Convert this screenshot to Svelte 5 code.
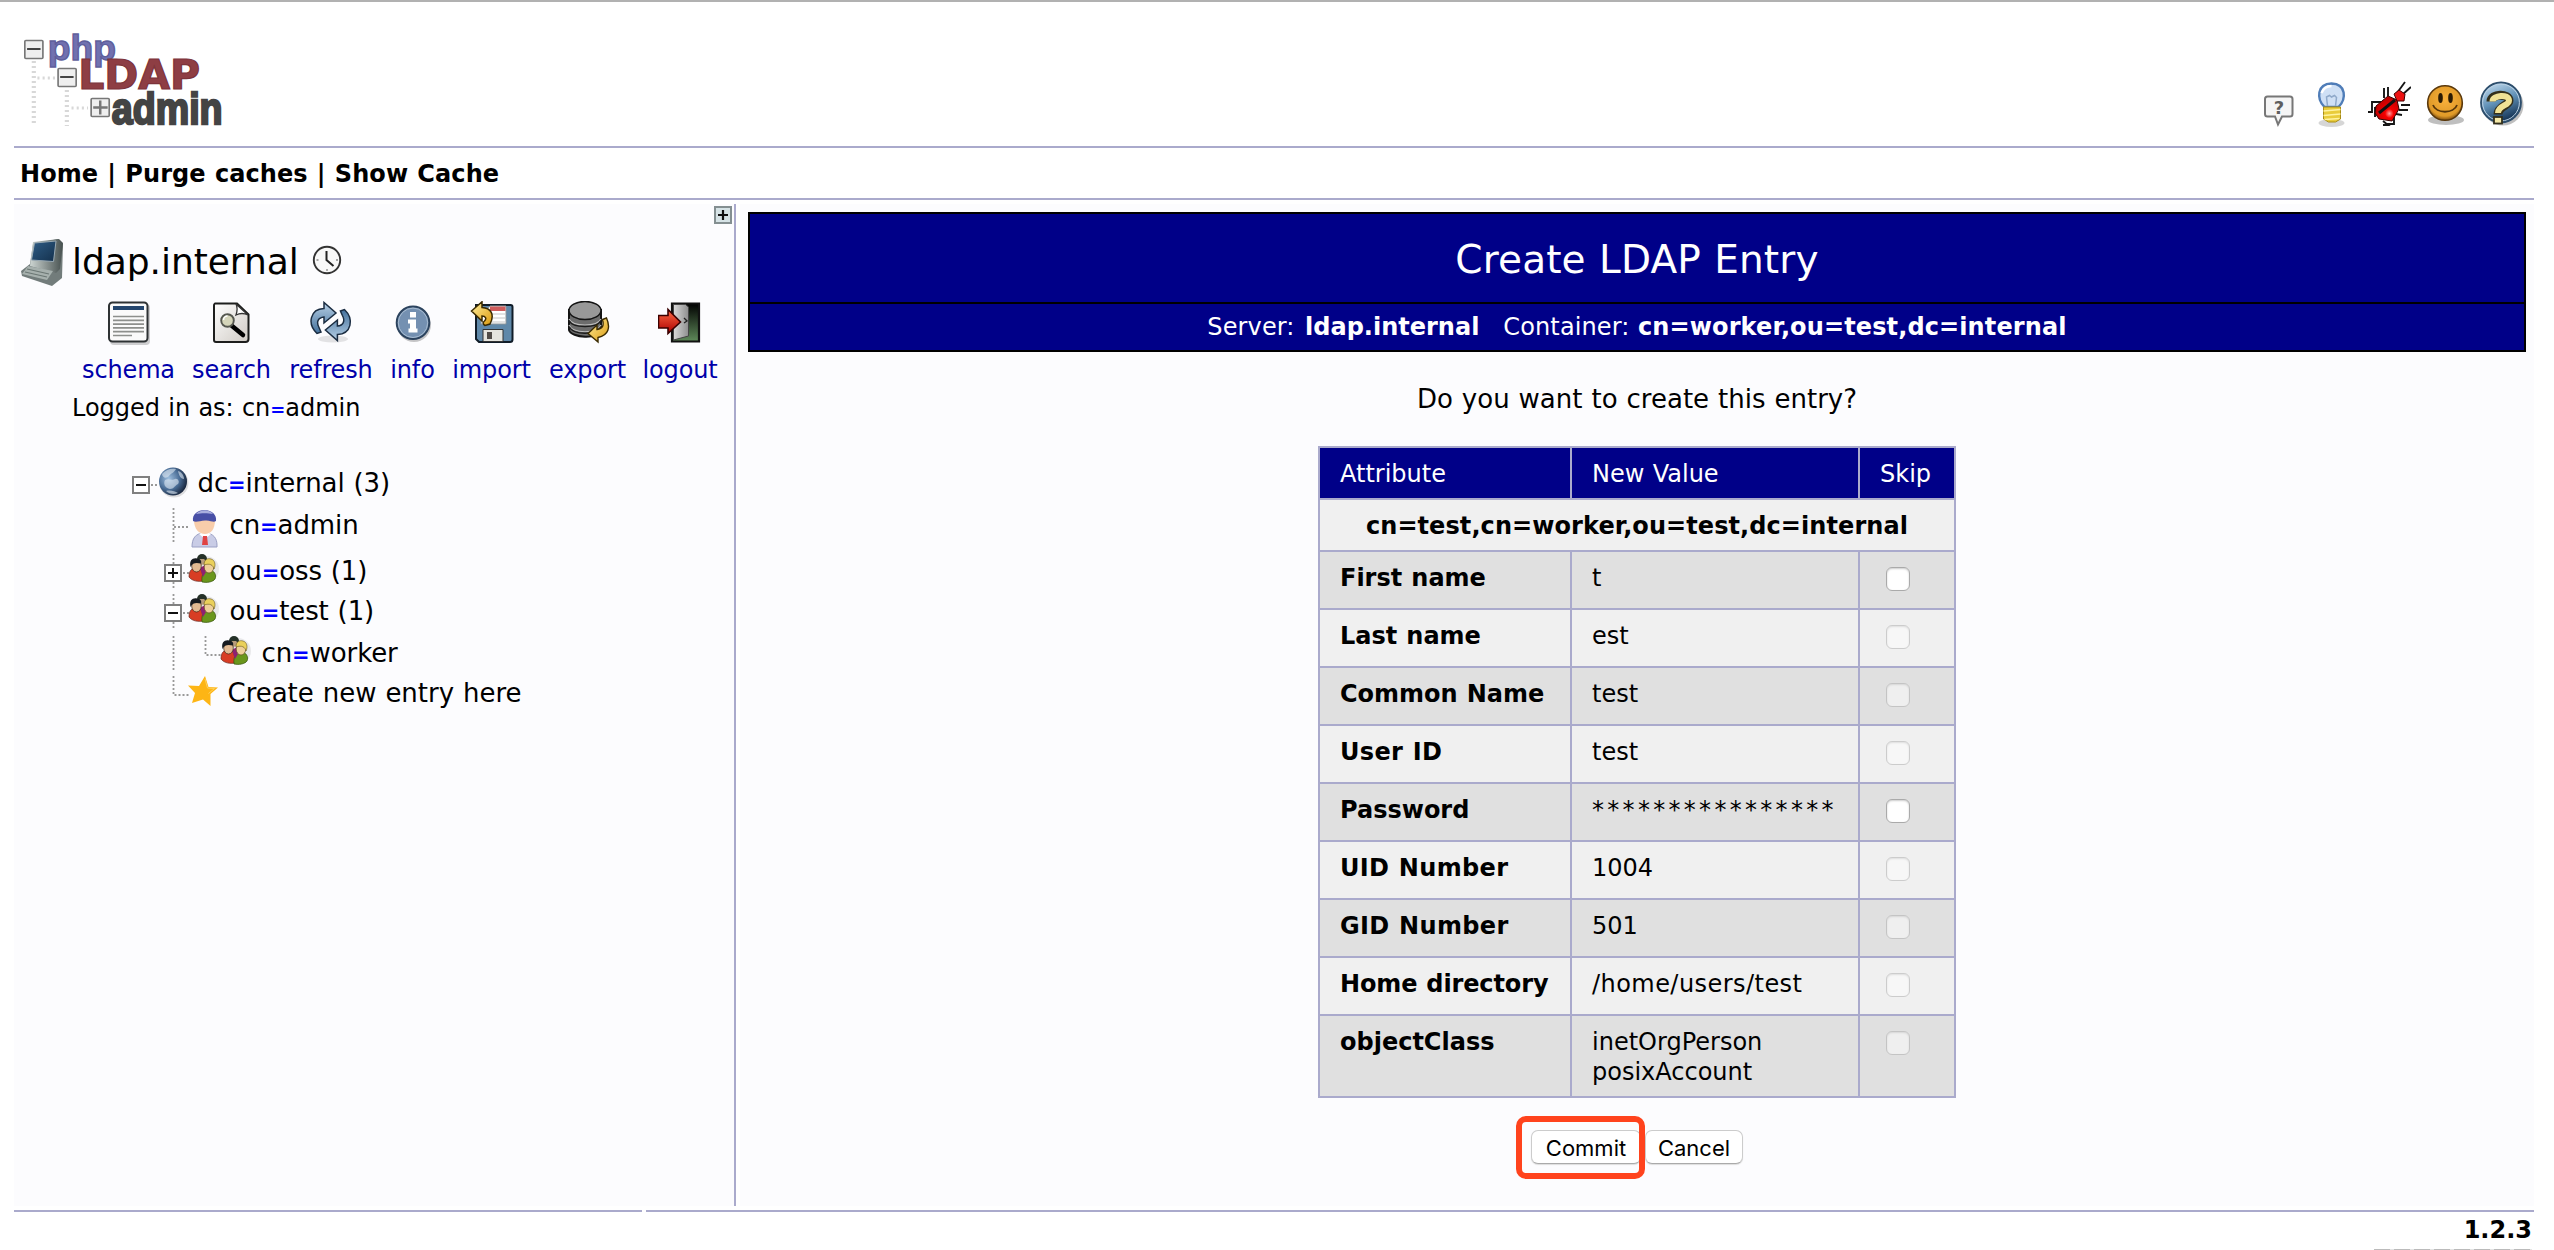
<script>
  const tools = ['schema', 'search', 'refresh', 'info', 'import', 'export', 'logout'];
  const helpers = ['hint', 'bulb', 'bug', 'smile', 'help'];

  const tree = [
    { cells: ['root', 'globe'], rdn: ['dc', 'internal (3)'], h: 42, up: 2 },
    { cells: ['gap', 'tee', 'person'], rdn: ['cn', 'admin'], h: 46, up: 2 },
    { cells: ['gap', 'plus', 'people'], rdn: ['ou', 'oss (1)'], h: 40, up: 2 },
    { cells: ['gap', 'minus', 'people'], rdn: ['ou', 'test (1)'], h: 42, up: 2 },
    { cells: ['gap', 'line', 'corner', 'people'], rdn: ['cn', 'worker'], h: 40, up: 2 },
    { cells: ['gap', 'corner', 'star'], label: 'Create new entry here', h: 40, up: 2 }
  ];

  const rows = [
    { name: 'First name', values: ['t'], skip: true },
    { name: 'Last name', values: ['est'] },
    { name: 'Common Name', values: ['test'] },
    { name: 'User ID', values: ['test'], wide: true },
    { name: 'Password', values: ['****************'], skip: true, masked: true },
    { name: 'UID Number', values: ['1004'], wide: true },
    { name: 'GID Number', values: ['501'], wide: true },
    { name: 'Home directory', values: ['/home/users/test'], path: true },
    { name: 'objectClass', values: ['inetOrgPerson', 'posixAccount'] }
  ];
</script>

{#snippet toolIcon(name)}
  <svg class="tool-icon" viewBox="0 0 44 46">
    {#if name === 'schema'}
      <rect x="3" y="3" width="40" height="41" rx="4" fill="#000" opacity=".18" />
      <rect x="2" y="1.500" width="38.500" height="39" rx="3.500" fill="#fafafa" stroke="#2e3234" stroke-width="2" />
      <path d="M6 5h31v4H6z" fill="#24466e" />
      <path d="M6 15.500h31M6 19.300h31M6 23.100h31M6 26.900h31M6 30.700h31M6 34.500h19" stroke="#8d8f8c" stroke-width="1.700" />
    {:else if name === 'search'}
      <path d="M5 2.500h22l11.500 11V38a3 3 0 0 1-3 3H6a2 2 0 0 1-2-2V4.500a2 2 0 0 1 1-2z" fill="url(#paper)" stroke="#1d1e1d" stroke-width="2" />
      <path d="M26 3c2 4 1 8 0 11 4-2 8-2 12 0z" fill="#fff" stroke="#333" stroke-width="1.300" />
      <path d="M21.500 24.500L33 34" stroke="#000" stroke-width="4.500" stroke-linecap="round" />
      <circle cx="17.500" cy="19.500" r="6.300" fill="#d5d5ba" stroke="#55574f" stroke-width="1.900" />
      <path d="M13.500 19a4 4 0 0 1 4-4" stroke="#fff" stroke-width="1.500" fill="none" />
    {:else if name === 'refresh'}
      <ellipse cx="24" cy="38" rx="15" ry="3.500" fill="#000" opacity=".1" />
      <path d="M8 32.500C-2 23 1 8 15 7.500V1.500L27 12 15 22v-6c-6 .5-8 5-5 10.500l2 4.500z" fill="url(#blue)" stroke="#1b2d42" stroke-width="1.500" />
      <path d="M8 32.500C-2 23 1 8 15 7.500V1.500L27 12 15 22v-6c-6 .5-8 5-5 10.500l2 4.500z" transform="rotate(180 21.700 20.500)" fill="url(#blue)" stroke="#1b2d42" stroke-width="1.500" />
    {:else if name === 'info'}
      <circle cx="23" cy="24" r="17" fill="#000" opacity=".22" />
      <circle cx="22" cy="21.800" r="16.300" fill="#7490b1" stroke="#2c435e" stroke-width="2" />
      <circle cx="22" cy="21.800" r="14.700" fill="none" stroke="#a8bcd1" stroke-width="1" />
      <path d="M19 11h6v5.500h-6zM17 18.500h8v9h1.500v4h-9v-4H19v-5h-2z" fill="#fff" />
    {:else if name === 'import'}
      <path d="M6 4h34.500a2 2 0 0 1 2 2v32.500a2.500 2.500 0 0 1-2.500 2.500H9l-3-3z" fill="#5f88a9" stroke="#101c28" stroke-width="2" />
      <path d="M20 5h16v18H11V15z" fill="#fff" stroke="#8c9499" />
      <path d="M20 5.500h15.500V10H20z" fill="#cf5c5c" />
      <path d="M20 13h15M17 17h18M13 21h22" stroke="#c5c5c5" stroke-width="1.200" />
      <path d="M13 28.500h20v12H13z" fill="#e5e5df" stroke="#333" />
      <path d="M17 31h5v7h-5z" fill="#504c48" />
      <path d="M1.500 10L12 .8v5.700c9 .5 13 7 8 16.500l-5 1.500c-2-1-2.500-3-.5-4.500 2.500-2.500 1-5-2.500-5v5z" fill="url(#gold)" stroke="#3a2a00" stroke-width="1.500" />
    {:else if name === 'export'}
      <path d="M3 9v20c2 8 30 10 32 0V9z" fill="#6c6c6c" stroke="#141414" stroke-width="2" />
      <path d="M3 18c4 8 28 8 32 0M3 24c4 9 28 9 32 0" fill="none" stroke="#bdbdbd" stroke-width="1.200" />
      <path d="M3 19.500c4 8 28 8 32 0M3 25.500c4 9 28 9 32 0" fill="none" stroke="#1b1b1b" stroke-width="1.500" />
      <ellipse cx="19" cy="9.500" rx="16" ry="9" fill="#989898" stroke="#141414" stroke-width="1.500" />
      <path d="M22 32.500L31 24v4.500c6-1 7-4 5.500-10l4-1.500c4 9 2.500 17-8.500 19.500V41z" fill="url(#gold)" stroke="#3a2a00" stroke-width="1.400" />
    {:else}
      <path d="M14 2.500h27v38H14z" fill="url(#night)" stroke="#111" stroke-width="2.200" />
      <path d="M15.500 3.500h12l3 2.500v29L15.500 39z" fill="url(#door)" stroke="#444" stroke-width="1" />
      <path d="M26 17l3 3-3 2" fill="none" stroke="#222" stroke-width="1.300" />
      <path d="M0.500 14.500h9.500V8.500L22.500 21 10 32.500V27H.5z" fill="url(#red)" stroke="#3a0000" stroke-width="1.600" />
    {/if}
  </svg>
{/snippet}

{#snippet treeCell(kind)}
  <svg class="cell" viewBox="0 0 32 36">
    {#if kind === 'tee' || kind === 'plus' || kind === 'minus' || kind === 'line'}
      <path class="dots" d="M16.500 0V35" />
    {/if}
    {#if kind === 'tee'}
      <path class="dots" d="M17 19H32" />
    {:else if kind === 'corner'}
      <path class="dots" d="M16.500 0V19H32" />
    {:else if kind === 'root' || kind === 'plus' || kind === 'minus'}
      <path class="dots" d="M26 19H32" />
      <rect x="8" y="11" width="16" height="16" fill="#fff" stroke="#808080" stroke-width="2" />
      <path d={kind === 'plus' ? 'M11 19h10M16 14v10' : 'M11 19h10'} stroke="#111" stroke-width="2" />
    {:else if kind === 'globe'}
      <circle cx="17" cy="17" r="14.500" fill="#000" opacity=".12" />
      <circle cx="16" cy="15.500" r="14" fill="url(#earth)" />
      <path d="M5 8c4-5 10-6 14-5-2 4-5 4-7 7-2 2-6 3-7-2zM8 14c4-2 7 1 10-1 3-1 5 3 3 5-4 2-4 5-8 5-5-1-7-5-5-9zM21 5c4 1 6 5 6 8-3 0-5-3-6-8zM9 25c4-1 9 0 12 2-4 2-9 1-12-2z" fill="#dfe9f3" opacity=".6" />
    {:else if kind === 'person'}
      <path d="M3 39c0-8 3-14 12.500-14S28 31 28 37v2z" fill="#c9cce6" stroke="#9ba0c4" />
      <path d="M10 26l6 5 6-5-6-3z" fill="#fff" />
      <path d="M14 28h4l1 9h-6z" fill="#e04343" />
      <path d="M5 12c0 9 5 14 11 14s10-5 10-14z" fill="#f8cdab" />
      <path d="M4 13C3 6 9 2 15.500 2 23 2 28 7 27 13c-3 2-5-1-11-.5-5 0-9 2.500-12 .5z" fill="#484fa6" />
      <path d="M7 6c5-5 13-5 17 0-5-1-12-1-17 0z" fill="#a9aede" />
    {:else if kind === 'people'}
      <g transform="translate(-1 0)">
        <circle cx="18" cy="15" r="13" fill="#000" opacity=".08" />
        <circle cx="14" cy="5" r="5" fill="#253128" />
        <path d="M10 7c0 5 8 5 8 0l-2-2h-4z" fill="#b89c7c" />
        <path d="M1 23c0-8 4-9 8-9s6 3 6 13c-5 1-11 0-14-4z" fill="#d83d24" stroke="#67241a" stroke-width=".7" />
        <path d="M14 28c-1-9 3-12 7-12 5 0 8 5 6 9-2 3-8 4-13 3z" fill="#6a961c" stroke="#33520b" stroke-width=".7" />
        <path d="M12 14l5-3 1 7-3 5z" fill="#8d2173" />
        <ellipse cx="8.500" cy="12" rx="4.800" ry="6" fill="#e2ba92" stroke="#382619" stroke-width=".7" />
        <path d="M2.500 13C1 6 5 3.500 9 4.500c3 .5 5 2 4 5-5-1-8-1-10.500 3.500z" fill="#171b20" />
        <ellipse cx="21" cy="13" rx="4.800" ry="6" fill="#efd09a" stroke="#655024" stroke-width=".7" />
        <path d="M16 11c0-6 4-7 7-6 4 1 5 6 3 10-1-4-4-6-10-4z" fill="#ead05b" stroke="#665620" stroke-width=".6" />
      </g>
    {:else if kind === 'star'}
      <path d="M16 0l3.500 11L29 11.500l-7.500 6.500 0 12-7.500-6.500L3 27l3-10L-1 9.500l11 .5z" fill="#fdb515" />
      <path d="M16 3l2.500 9 7 .5-6 5" fill="none" stroke="#ffd05a" stroke-width="1" />
    {/if}
  </svg>
{/snippet}

<svg class="defs" aria-hidden="true">
  <defs>
    <linearGradient id="paper" x1="0" y1="0" x2="1" y2="1"><stop offset="0" stop-color="#fff" /><stop offset="1" stop-color="#cfcac4" /></linearGradient>
    <linearGradient id="blue" x1="0" y1="0" x2="0" y2="1"><stop offset="0" stop-color="#b7d0e6" /><stop offset="1" stop-color="#43709b" /></linearGradient>
    <linearGradient id="gold" x1="0" y1="0" x2="1" y2="1"><stop offset="0" stop-color="#fff0a0" /><stop offset="1" stop-color="#dc9a0c" /></linearGradient>
    <linearGradient id="night" x1="0" y1="0" x2="0" y2="1"><stop offset="0" stop-color="#000" /><stop offset="1" stop-color="#5f8a5a" /></linearGradient>
    <linearGradient id="door" x1="0" y1="0" x2="1" y2="0"><stop offset="0" stop-color="#d9d9d9" /><stop offset="1" stop-color="#8e8e8e" /></linearGradient>
    <linearGradient id="red" x1="0" y1="0" x2="0" y2="1"><stop offset="0" stop-color="#ff6a45" /><stop offset="1" stop-color="#ab0000" /></linearGradient>
    <radialGradient id="earth" cx=".35" cy=".4" r=".7"><stop offset="0" stop-color="#a0c0e0" /><stop offset=".55" stop-color="#4a6d96" /><stop offset="1" stop-color="#131e33" /></radialGradient>
    <linearGradient id="screen" x1="0" y1="0" x2="1" y2="1"><stop offset="0" stop-color="#2f5d86" /><stop offset="1" stop-color="#14304c" /></linearGradient>
    <linearGradient id="shell" x1="0" y1="0" x2="1" y2="0"><stop offset="0" stop-color="#cdd5d2" /><stop offset="1" stop-color="#46504f" /></linearGradient>
    <radialGradient id="face" cx=".5" cy=".4" r=".6"><stop offset="0" stop-color="#f9b13c" /><stop offset=".8" stop-color="#e09a28" /><stop offset="1" stop-color="#7a4c10" /></radialGradient>
    <linearGradient id="ball" x1=".2" y1="0" x2=".6" y2="1"><stop offset="0" stop-color="#c4dcee" /><stop offset=".5" stop-color="#6090b6" /><stop offset="1" stop-color="#0f2d4e" /></linearGradient>
    <radialGradient id="beetle" cx=".6" cy=".7" r=".6"><stop offset="0" stop-color="#ff9c9c" /><stop offset=".3" stop-color="#f50000" /><stop offset="1" stop-color="#c00000" /></radialGradient>
  </defs>
</svg>

<div class="page">
  <header>
    <svg class="logo" viewBox="0 -10 200 114" preserveAspectRatio="none">
      <path class="trunk" d="M9.500 33V98M41.500 62V98" />
      <path class="trunk thin" d="M13 50H31M46 80H62" />
      <text class="php" x="23" y="31.500" textLength="66" lengthAdjust="spacingAndGlyphs">php</text>
      <text class="ldap" x="52.500" y="61.500" textLength="118" lengthAdjust="spacingAndGlyphs">LDAP</text>
      <g transform="translate(85 95.500) scale(.72 1)"><text class="admin" x="0" y="0" textLength="149" lengthAdjust="spacingAndGlyphs">admin</text></g>
      <g fill="#efefef" stroke="#777" stroke-width="1.600">
        <rect x="0.800" y="12.500" width="17.500" height="18" rx="1" />
        <rect x="33" y="40.500" width="17.500" height="18" rx="1" />
        <rect x="65" y="70.500" width="17.500" height="18" rx="1" />
      </g>
      <path d="M3 21H16M35 49H48" stroke="#444" stroke-width="2.200" />
      <path d="M67 79.500H81M73.800 72.500V86.500" stroke="#777" stroke-width="2.400" />
    </svg>
    <div class="helpers">
      {#each helpers as name}
        <svg class={name} viewBox="0 0 44 48">
          {#if name === 'hint'}
            <g transform="translate(1.500 0)">
              <path d="M12 16.500h22.500a2.500 2.500 0 0 1 2.500 2.500v15a2.500 2.500 0 0 1-2.500 2.500H26.500l-4 8-3-8H12a2.500 2.500 0 0 1-2.500-2.500V19a2.500 2.500 0 0 1 2.500-2.500z" fill="#f5f5f5" stroke="#777" stroke-width="2" />
              <text x="23.500" y="33.500" text-anchor="middle" class="hint-mark">?</text>
            </g>
          {:else if name === 'bulb'}
            <g transform="translate(-1.500 1)">
              <ellipse cx="22" cy="42" rx="13" ry="4" fill="#000" opacity=".16" />
              <path d="M15 26C7 18 7 3 22 2.500 37 3 37 18 29 26z" fill="#cfe0f5" stroke="#4f7db8" stroke-width="2.400" />
              <path d="M18 25l-1-9 3-1.500 2 1.500 3-1.500 2 2-1 8.500" fill="none" stroke="#8fa9ca" stroke-width="1.500" />
              <path d="M12 12c2-5 6-7 10-7" fill="none" stroke="#fff" stroke-width="2.500" />
              <path d="M14 26h17v12l-5 3h-7l-5-3z" fill="#e9cc3b" stroke="#a98c13" />
              <path d="M14 30l17-1.500M14 34.500l17-1.500M15 38.500l15-1" stroke="#fff3a0" stroke-width="1.500" />
            </g>
          {:else if name === 'bug'}
            <path d="M17 18V8M21 16V7M30 13l8-11M35 15l9-8M14 22H5v10H1M12 28H8v9M34 25h9M32 30h9M29 34l6 1M27 37v7h-7M16 41l5 4h-5" fill="none" stroke="#161616" stroke-width="1.900" />
            <path d="M9 26l12-10 9 4 2 9-7 12-13-2-4-6z" fill="url(#beetle)" stroke="#300" stroke-width="1" />
            <path d="M27 14l5-4 6 4-1 7-7 0z" fill="#ee1111" stroke="#400" />
            <path d="M12 33L28 20" stroke="#111" stroke-width="3" />
          {:else if name === 'smile'}
            <g transform="translate(-1 1)">
              <ellipse cx="23" cy="39" rx="18" ry="5" fill="#000" opacity=".25" />
              <circle cx="22" cy="22" r="17.300" fill="url(#face)" stroke="#5a380b" stroke-width="1.600" />
              <ellipse cx="17.500" cy="17" rx="2.300" ry="5" fill="#2c1c04" /><ellipse cx="27.500" cy="17" rx="2.300" ry="5" fill="#2c1c04" />
              <path d="M10 24c3 9 21 9 24 0" fill="none" stroke="#55350a" stroke-width="1.800" />
            </g>
          {:else}
            <circle cx="23" cy="25" r="20.500" fill="#000" opacity=".25" />
            <circle cx="21" cy="22.500" r="20" fill="url(#ball)" stroke="#2d4e6c" stroke-width="1.800" />
            <circle cx="21" cy="22.500" r="18.400" fill="none" stroke="#bcd2e4" stroke-width="1" />
            <path d="M11 21.500c0-8 18-8.500 18-1 0 5.500-11 5-11 14" fill="none" stroke="#34301c" stroke-width="9" />
            <path d="M12.500 21.500c0-6.500 16.500-8 16.500-1 0 5.500-11 4.500-11 12.500" fill="none" stroke="#f1e295" stroke-width="6" />
            <rect x="14" y="37" width="8" height="6.500" fill="#f6eaa8" stroke="#34301c" stroke-width="1.800" />
          {/if}
        </svg>
      {/each}
    </div>
  </header>

  <nav><a>Home</a> | <a>Purge caches</a> | <a>Show Cache</a></nav>

  <div class="columns">
    <aside>
      <svg class="expand" viewBox="0 0 18 18">
        <rect x="1" y="1" width="16" height="16" fill="#d6e3e6" stroke="#848f91" stroke-width="2" />
        <path d="M4 9h10M9 4v10" stroke="#111" stroke-width="2.200" />
      </svg>
      <div class="server">
        <svg class="computer" viewBox="0 0 42 48">
          <path d="M12 6L37 1l5 5-1 34-10 8L1 38l-1-5 9-7z" fill="#727c7b" />
          <path d="M12 4L38 1l4 4-3 26-4 4-26-7z" fill="url(#shell)" />
          <path d="M13.500 5L35 3l-2.500 20.500L10.500 22z" fill="url(#screen)" stroke="#99a9b3" stroke-width="1" />
          <path d="M7 28l25 5-6 9L1 36z" fill="#a6b0ad" />
          <path d="M6 31l22 5M4 34l22 5" stroke="#6b7774" stroke-width="1.200" />
        </svg>
        <span class="name">ldap.internal</span>
        <svg class="clock" viewBox="0 0 30 30">
          <circle cx="15" cy="15" r="13.200" fill="#f8f8f8" stroke="#333" stroke-width="1.900" />
          <path d="M14.500 6v9l7 6" fill="none" stroke="#222" stroke-width="2" />
          <path d="M15 24v2M4.500 15h2M24 15h2" stroke="#888" stroke-width="1.300" />
        </svg>
      </div>
      <div class="tools">
        {#each tools as tool}
          <a class="tool">{@render toolIcon(tool)}<span>{tool}</span></a>
        {/each}
      </div>
      <p class="login">Logged in as: cn<b class="eq small">=</b>admin</p>
      <ul class="tree">
        {#each tree as node}
          <li style="height:{node.h}px">
            {#each node.cells as kind}{@render treeCell(kind)}{/each}
            <span class="label" class:create={node.label} style="padding-top:{node.up}px">
              {#if node.rdn}{node.rdn[0]}<b class="eq">=</b>{node.rdn[1]}{:else}{node.label}{/if}
            </span>
          </li>
        {/each}
      </ul>
    </aside>

    <main>
      <section class="banner">
        <h1>Create LDAP Entry</h1>
        <p>Server: <b class="host">ldap.internal</b><span class="container">Container: <b>cn=worker,ou=test,dc=internal</b></span></p>
      </section>
      <p class="question">Do you want to create this entry?</p>
      <div class="sheet">
        <div class="row head"><span>Attribute</span><span>New Value</span><span>Skip</span></div>
        <div class="dn">cn=test,cn=worker,ou=test,dc=internal</div>
        {#each rows as row, i}
          <div class="row" class:odd={i % 2 === 0} class:tall={row.values.length > 1}>
            <b class:wide={row.wide} class:narrow={row.path}>{row.name}</b>
            <span class:masked={row.masked} class:path={row.path}>{#each row.values as value}<div>{value}</div>{/each}</span>
            <span><input type="checkbox" disabled={!row.skip} /></span>
          </div>
        {/each}
      </div>
      <div class="actions">
        <button class="commit">Commit</button><button class="cancel">Cancel</button>
        <i class="highlight"></i>
      </div>
    </main>
  </div>

  <div class="rules"><i></i><i></i></div>
  <footer>1.2.3</footer>
  <div class="badge"></div>
</div>

<style>
  :global(body) { background: #fff; overflow: hidden; }
  .page {
    box-sizing: border-box; width: 2554px; height: 1250px; overflow: hidden;
    border-top: 2px solid #b1b1b1; padding: 0 20px 0 14px;
    font-family: 'DejaVu Sans', Verdana, sans-serif; font-size: 24px; color: #000;
    word-spacing: .03em; background: #fff;
  }
  .defs { position: absolute; width: 0; height: 0; }
  svg { display: block; flex: none; }

  header { display: flex; justify-content: space-between; height: 144px; border-bottom: 2px solid #aaaacc; }
  .logo { width: 206.600px; height: 114px; margin: 16px 0 0 10px; overflow: visible; }
  .trunk { fill: none; stroke: #d8d8d8; stroke-width: 4; stroke-dasharray: 2 3; }
  .thin { stroke-width: 3; }
  .php { font: bold 36px 'Liberation Sans', sans-serif; word-spacing: 0; fill: #7171b0; stroke: #5f5f9c; stroke-width: 1.400; }
  .ldap { font: bold 40px 'DejaVu Sans', sans-serif; fill: #8e3e44; stroke: #7c333a; stroke-width: 1.200; }
  .admin { font: bold 45px 'Liberation Sans', sans-serif; fill: #444; stroke: #444; stroke-width: 2.400; }
  .helpers { display: flex; padding: 78px 10px 0 0; gap: 12.500px; }
  .helpers svg { width: 44px; height: 48px; }
  .hint-mark { font: bold 18px 'DejaVu Sans', sans-serif; fill: #5e5e5e; }

  nav { height: 50px; line-height: 53px; padding-left: 6px; font-weight: bold; border-bottom: 2px solid #aaaacc; white-space: pre; letter-spacing: .08px; }

  .columns { display: flex; gap: 4px; height: 1002px; margin-top: 4px; }
  aside { position: relative; width: 720px; background: #fcfcfe; border-right: 2px solid #aaaacc; }
  .expand { position: absolute; right: 2px; top: 2px; width: 18px; height: 18px; }
  .server { display: flex; align-items: flex-start; padding: 34px 0 0 7px; }
  .computer { width: 42px; height: 48px; }
  .name { font-size: 36px; line-height: 47px; margin-left: 9px; letter-spacing: -.05px; }
  .clock { width: 30px; height: 30px; margin: 7px 0 0 13px; }
  .tools { display: grid; grid-template-columns: 109px 97px 102px 61px 97px 95px 90px; padding: 15px 0 0 60px; }
  .tool { display: flex; flex-direction: column; align-items: center; color: #0000aa; line-height: 30px; letter-spacing: -.15px; }
  .tool-icon { width: 44px; height: 46px; margin-bottom: 8px; }
  .login { margin: 8px 0 0 58px; line-height: 30px; letter-spacing: -.03px; }
  .eq { color: #00f; font-size: 21px; line-height: 1; }
  .eq.small { font-size: 18px; }

  .tree { list-style: none; margin: 43px 0 0; padding: 0 0 0 111px; font-size: 26px; }
  .tree li { display: flex; align-items: flex-start; }
  .cell { width: 32px; height: 36px; overflow: visible; }
  .dots { fill: none; stroke: #999; stroke-width: 1.800; stroke-dasharray: 2 2; }
  .label { margin-left: 8.500px; line-height: 31px; white-space: nowrap; letter-spacing: -.1px; }
  .label.create { margin-left: 6.500px; letter-spacing: -.02px; }

  main { flex: 1; background: #fcfcfe; display: flex; flex-direction: column; align-items: center; padding: 8px 8px 0; }
  .banner { align-self: stretch; border: 2px solid #000; background: #000088; color: #fff; text-align: center; }
  h1 { margin: 0; height: 88px; line-height: 91px; font-size: 39px; font-weight: normal; border-bottom: 2px solid #000; letter-spacing: .15px; }
  .banner p { margin: 0; height: 46px; line-height: 47px; letter-spacing: .12px; }
  .host { margin-left: 2px; letter-spacing: 0; }
  .container { margin-left: 24px; }
  .question { margin: 30px 0 0; font-size: 26px; line-height: 34px; }
  .sheet {
    box-sizing: border-box; width: 638px; margin-top: 30px; padding: 2px;
    background: #aaaacc; display: flex; flex-direction: column; gap: 2px;
  }
  .row { display: grid; grid-template-columns: 250px 286px 94px; gap: 2px; height: 56px; line-height: 30px; }
  .row > * { padding: 11px 0 0 20px; background: #f0f0f0; white-space: nowrap; }
  .row > .masked { letter-spacing: 3.300px; }
  .row > .path { letter-spacing: .45px; }
  .row > .wide { letter-spacing: .35px; }
  .row > .narrow { letter-spacing: -.12px; }
  .row.odd > * { background: #e0e0e0; }
  .row.tall { height: 80px; }
  .row.head { height: 50px; color: #fff; }
  .row.head > * { background: #000088; padding-top: 11px; }
  .dn { height: 50px; line-height: 52px; text-align: center; background: #f0f0f0; font-weight: bold; letter-spacing: .08px; }
  input {
    appearance: none; display: block; box-sizing: border-box; width: 24px; height: 24px; margin: 4px 0 0 6px;
    border: 1.500px solid #aaa; border-radius: 6px; background: #fff; box-shadow: inset 0 1px 2px #ccc;
  }
  input:disabled { opacity: .5; }

  .actions { position: relative; display: flex; gap: 4px; margin: 32px 0 0; width: 212px; }
  button {
    box-sizing: border-box; height: 34px; padding: 2px 0 0; border: 1px solid #ccc; border-bottom-color: #aaa; border-radius: 7px;
    background: #fff; color: #000; font: 22px/30px Inter, sans-serif; box-shadow: 0 1px 1px #ddd;
  }
  .commit { width: 110px; }
  .cancel { width: 98px; }
  .highlight { position: absolute; left: -15px; top: -14px; box-sizing: border-box; width: 129px; height: 63px; border: 6px solid #ff431d; border-radius: 10px; }

  .rules { display: flex; gap: 4px; margin-top: 4px; }
  .rules i { height: 2px; background: #aaaacc; width: 628px; }
  .rules i + i { width: auto; flex: 1; }
  footer { height: 37px; line-height: 36px; text-align: right; font-weight: bold; padding-right: 2px; }
  .badge { margin: 0 2px 0 auto; width: 158px; height: 1px; background: repeating-linear-gradient(90deg, #bbb 0 16px, #e4e4e4 16px 20px); }
</style>
